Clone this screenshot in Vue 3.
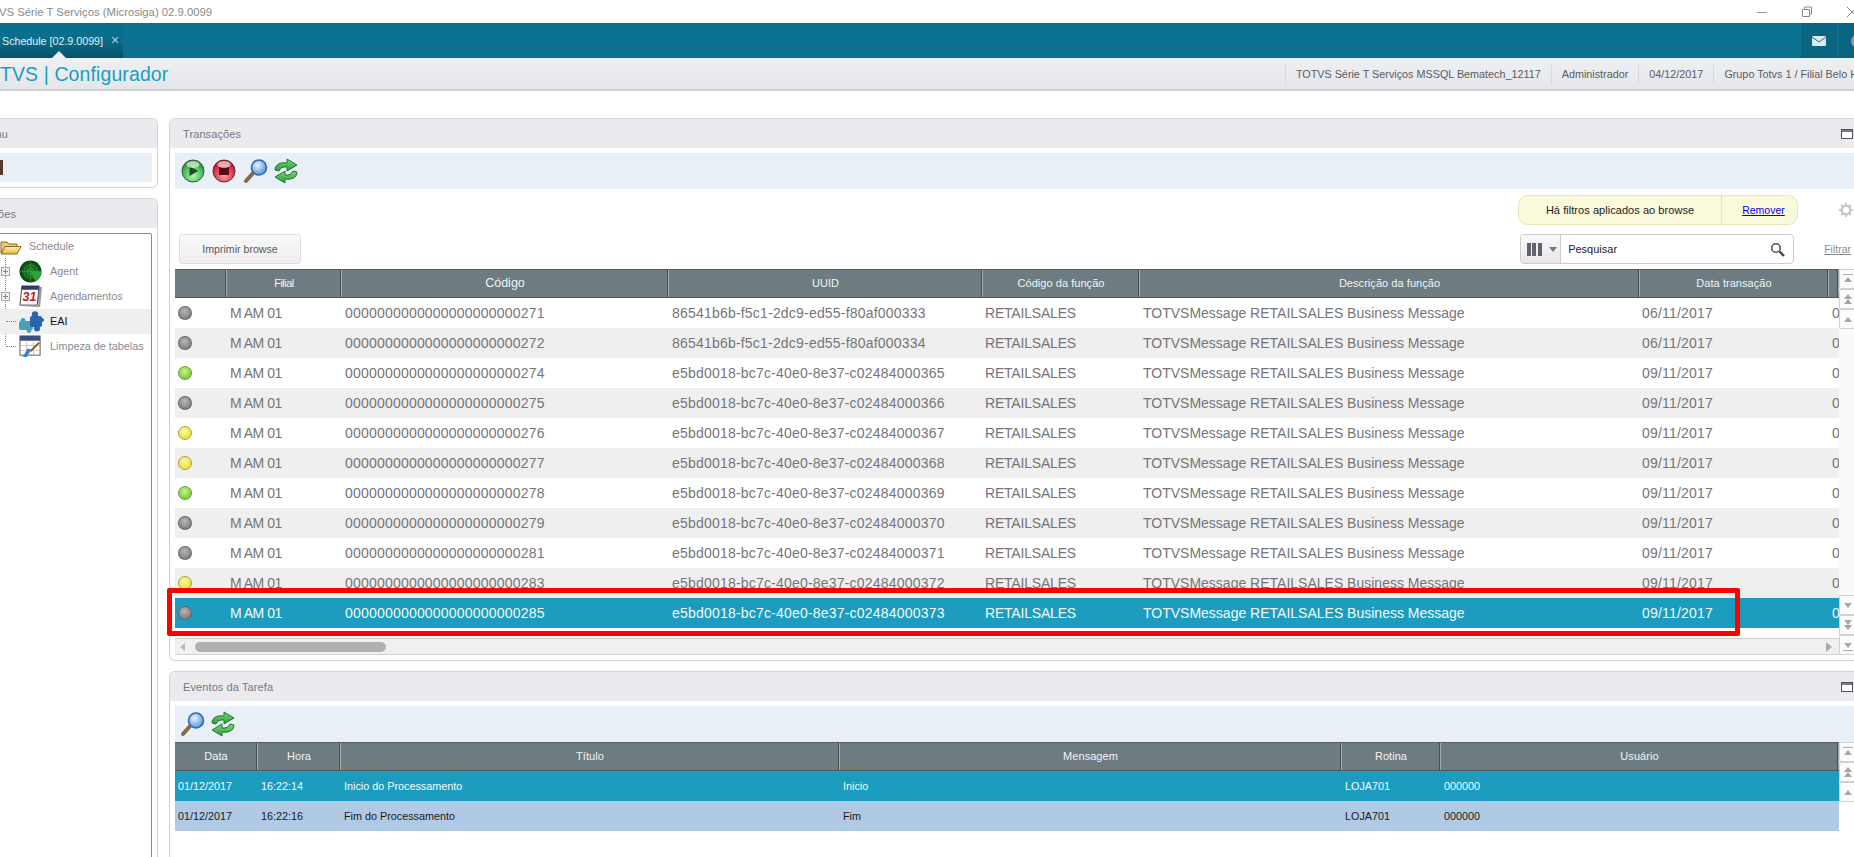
<script setup>
const cols = [
  { label: '', w: 52 },
  { label: 'Filial', w: 115 },
  { label: 'Código', w: 327, strong: true },
  { label: 'UUID', w: 314 },
  { label: 'Código da função', w: 157 },
  { label: 'Descrição da função', w: 500 },
  { label: 'Data transação', w: 189 },
  { label: '', w: 10 }
]
const rows = [
  ['gray', '271', '86541b6b-f5c1-2dc9-ed55-f80af000333', '06/11/2017'],
  ['gray', '272', '86541b6b-f5c1-2dc9-ed55-f80af000334', '06/11/2017'],
  ['green', '274', 'e5bd0018-bc7c-40e0-8e37-c02484000365', '09/11/2017'],
  ['gray', '275', 'e5bd0018-bc7c-40e0-8e37-c02484000366', '09/11/2017'],
  ['yellow', '276', 'e5bd0018-bc7c-40e0-8e37-c02484000367', '09/11/2017'],
  ['yellow', '277', 'e5bd0018-bc7c-40e0-8e37-c02484000368', '09/11/2017'],
  ['green', '278', 'e5bd0018-bc7c-40e0-8e37-c02484000369', '09/11/2017'],
  ['gray', '279', 'e5bd0018-bc7c-40e0-8e37-c02484000370', '09/11/2017'],
  ['gray', '281', 'e5bd0018-bc7c-40e0-8e37-c02484000371', '09/11/2017'],
  ['yellow', '283', 'e5bd0018-bc7c-40e0-8e37-c02484000372', '09/11/2017'],
  ['gray', '285', 'e5bd0018-bc7c-40e0-8e37-c02484000373', '09/11/2017']
]
const prefix = '0'.repeat(22)
const evCols = [
  { label: 'Data', w: 83 },
  { label: 'Hora', w: 83 },
  { label: 'Título', w: 499 },
  { label: 'Mensagem', w: 502 },
  { label: 'Rotina', w: 99 },
  { label: 'Usuário', w: 398 }
]
const events = [
  ['01/12/2017', '16:22:14', 'Inicio do Processamento', 'Inicio', 'LOJA701', '000000'],
  ['01/12/2017', '16:22:16', 'Fim do Processamento', 'Fim', 'LOJA701', '000000']
]
const infoCells = ['TOTVS Série T Serviços MSSQL Bematech_12117', 'Administrador', '04/12/2017', 'Grupo Totvs 1 / Filial Belo H']
</script>

<template>
  <div class="app">
    <svg width="0" height="0" class="defs">
      <defs>
        <radialGradient id="gGreen" cx=".5" cy=".72" r=".72"><stop offset="0" stop-color="#b4f2b0"/><stop offset=".6" stop-color="#4ac056"/><stop offset="1" stop-color="#1a7a2a"/></radialGradient>
        <radialGradient id="gRed" cx=".5" cy=".72" r=".72"><stop offset="0" stop-color="#f7a0a4"/><stop offset=".6" stop-color="#de3a48"/><stop offset="1" stop-color="#a01020"/></radialGradient>
        <radialGradient id="gLens" cx=".4" cy=".35" r=".7"><stop offset="0" stop-color="#eaf4ff"/><stop offset="1" stop-color="#4c8fd6"/></radialGradient>
        <radialGradient id="gRadar" cx=".5" cy=".5" r=".55"><stop offset="0" stop-color="#1f8428"/><stop offset="1" stop-color="#07400c"/></radialGradient>
        <linearGradient id="gFolder" x1="0" y1="0" x2="0" y2="1"><stop offset="0" stop-color="#fff3a8"/><stop offset="1" stop-color="#e8b83c"/></linearGradient>
        <linearGradient id="gArrow" x1="0" y1="0" x2="0" y2="1"><stop offset="0" stop-color="#7fd37f"/><stop offset="1" stop-color="#2c9a3a"/></linearGradient>
        <symbol id="icoSearch" viewBox="0 0 26 26">
          <line x1="3" y1="23" x2="11" y2="14" stroke="#8a6748" stroke-width="4" stroke-linecap="round"/>
          <circle cx="16" cy="9.500" r="7.500" fill="url(#gLens)" stroke="#2f6aa8" stroke-width="1.600"/>
        </symbol>
        <symbol id="icoRefresh" viewBox="0 0 24 26">
          <path d="M1 12 C1 6 7 4 13 5 V1 L23 7 L13 13 V9 C9 8.500 6 10 5 13 Z" fill="url(#gArrow)" stroke="#1e7a2a"/>
          <path d="M23 14 C23 20 17 22 11 21 V25 L1 19 L11 13 V17 C15 17.500 18 16 19 13 Z" fill="url(#gArrow)" stroke="#1e7a2a"/>
        </symbol>
      </defs>
    </svg>

    <header class="titlebar">
      <span class="title-text">VS Série T Serviços (Microsiga) 02.9.0099</span>
      <div class="win-ctrls">
        <svg width="12" height="12" viewBox="0 0 12 12"><line x1="1" y1="6.500" x2="11" y2="6.500" stroke="#999" /></svg>
        <svg width="12" height="12" viewBox="0 0 12 12"><path d="M3.500 3V1H10.500V8H8.500M1.500 3.500H8.500V10.500H1.500Z" fill="none" stroke="#888"/></svg>
        <svg width="12" height="12" viewBox="0 0 12 12"><path d="M1 1L11 11M11 1L1 11" stroke="#888" fill="none"/></svg>
      </div>
    </header>

    <nav class="tabbar">
      <div class="tab">
        <span>Schedule [02.9.0099]</span>
        <span class="tab-x">×</span>
        <i class="tab-arrow"></i>
      </div>
      <div class="tab-right">
        <div class="tb-btn">
          <svg width="14" height="10" viewBox="0 0 14 10"><rect width="14" height="10" rx="1" fill="#dfe9ee"/><path d="M0 1L7 6L14 1" fill="none" stroke="#0b7190"/></svg>
        </div>
        <div class="tb-btn tb-last"><i class="avatar"></i></div>
      </div>
    </nav>

    <div class="subheader">
      <span class="brand">TVS | Configurador</span>
      <div class="info">
        <span v-for="c in infoCells" :key="c" class="info-cell">{{ c }}</span>
      </div>
    </div>

    <main class="content">
      <aside class="side">
        <section class="panel menu-panel">
          <div class="panel-head side-head"><span class="clip-menu">Menu</span></div>
          <div class="menu-body"><div class="menu-box"><i class="menu-mark"></i></div></div>
        </section>
        <section class="panel tree-panel">
          <div class="panel-head side-head"><span class="clip-acoes">Ações</span></div>
          <div class="tree">
            <i class="tree-line"></i>
            <div class="node first">
              <svg class="folder" width="22" height="16" viewBox="0 0 22 16">
                <path d="M1 14V3H7L9 5H17V8H6L1 14Z" fill="#e8c97a" stroke="#8a6a2a"/>
                <path d="M1 15L5 7.500H21L17 15Z" fill="url(#gFolder)" stroke="#8a6a2a"/>
              </svg>
              <span class="label">Schedule</span>
            </div>
            <div class="node">
              <i class="plus"></i>
              <svg class="ico" width="23" height="23" viewBox="0 0 24 24">
                <circle cx="12" cy="12" r="11.500" fill="url(#gRadar)"/>
                <path d="M12 12L23 12A11 11 0 0 1 17 22Z" fill="#2fa23a"/>
                <circle cx="12" cy="12" r="7" fill="none" stroke="#4aa84e" stroke-width=".6"/>
                <circle cx="12" cy="12" r="3.500" fill="none" stroke="#4aa84e" stroke-width=".6"/>
                <path d="M12 1V23M1 12H23" stroke="#4aa84e" stroke-width=".5"/>
              </svg>
              <span class="label">Agent</span>
            </div>
            <div class="node">
              <i class="plus"></i>
              <svg class="ico" width="23" height="23" viewBox="0 0 24 24">
                <path d="M3 23L22 23L24 2H20V22Z" fill="#9a9a9a"/>
                <path d="M3 1H21L19 21H1Z" fill="#fff" stroke="#444"/>
                <path d="M3 1H21L20.500 5H2.500Z" fill="#2a3f6e"/>
                <text x="11" y="17" text-anchor="middle" class="cal-num">31</text>
              </svg>
              <span class="label">Agendamentos</span>
            </div>
            <div class="node active">
              <i class="stub"></i>
              <svg class="ico eai-ico" width="26" height="24" viewBox="0 0 26 24">
                <g fill="#4b9fb7">
                  <rect x="1" y="11" width="14" height="9" rx="2"/>
                  <circle cx="5" cy="10.500" r="2.400"/>
                  <circle cx="11" cy="20.500" r="2.400"/>
                </g>
                <g fill="#2a65a8">
                  <rect x="12" y="6" width="12" height="11" rx="2"/>
                  <circle cx="17" cy="4.500" r="3.200"/>
                  <circle cx="24" cy="10" r="2"/>
                  <circle cx="19" cy="18.500" r="3"/>
                </g>
              </svg>
              <span class="label eai">EAI</span>
            </div>
            <div class="node">
              <i class="stub"></i>
              <svg class="ico" width="23" height="23" viewBox="0 0 24 24">
                <rect x="1" y="1" width="21" height="20" fill="#fff" stroke="#555"/>
                <rect x="1" y="1" width="21" height="5" fill="#3a5078"/>
                <path d="M1 11H22M1 16H22M8 6V21M15 6V21" stroke="#bbb" stroke-width=".8"/>
                <path d="M21 8L12 17" stroke="#8a5a20" stroke-width="2"/>
                <path d="M13 15L8 23L4 23L9 14Z" fill="#3f7ccf"/>
              </svg>
              <span class="label">Limpeza de tabelas</span>
            </div>
          </div>
        </section>
      </aside>

      <div class="main">
        <section class="panel trans">
          <div class="panel-head">
            <span>Transações</span>
            <i class="collapse"></i>
          </div>
          <div class="toolbar">
            <svg width="24" height="24" viewBox="0 0 24 24"><circle cx="12" cy="12" r="11" fill="url(#gGreen)" stroke="#2c5c36"/><path d="M8.500 7L17 12L8.500 17Z" fill="#1d4a28"/><ellipse cx="12" cy="5.500" rx="6.500" ry="3.500" fill="#fff" opacity=".6"/></svg>
            <svg width="24" height="24" viewBox="0 0 24 24"><circle cx="12" cy="12" r="11" fill="url(#gRed)" stroke="#6a2630"/><rect x="7" y="8" width="10" height="8" fill="#5a0a12"/><ellipse cx="12" cy="5.500" rx="6.500" ry="3.500" fill="#fff" opacity=".6"/></svg>
            <svg width="26" height="26"><use href="#icoSearch"/></svg>
            <svg class="refresh" width="24" height="26"><use href="#icoRefresh"/></svg>
          </div>
          <div class="filter-area">
            <button class="print">Imprimir browse</button>
            <div class="filter-right">
              <div class="filter-top">
                <div class="pill">
                  <span class="pill-text">Há filtros aplicados ao browse</span>
                  <a class="pill-link">Remover</a>
                </div>
                <svg class="gear" width="14" height="14" viewBox="0 0 14 14"><circle cx="7" cy="7" r="4.200" fill="none" stroke="#c8c8c8" stroke-width="2.400"/><path d="M7 0V3M7 11V14M0 7H3M11 7H14M2 2L4 4M10 10L12 12M12 2L10 4M4 10L2 12" stroke="#c8c8c8" stroke-width="2"/></svg>
              </div>
              <div class="filter-bottom">
                <div class="search">
                  <div class="search-cols">
                    <i class="bars"></i>
                    <i class="caret"></i>
                  </div>
                  <span class="search-text">Pesquisar</span>
                  <svg width="15" height="15" viewBox="0 0 15 15"><circle cx="6" cy="6" r="4.300" fill="none" stroke="#555" stroke-width="1.600"/><line x1="9.500" y1="9.500" x2="14" y2="14" stroke="#444" stroke-width="2.400"/></svg>
                </div>
                <a class="filtrar">Filtrar</a>
              </div>
            </div>
          </div>

          <div class="grid-wrap">
            <div class="grid">
              <div class="ghead">
                <div v-for="(c, i) in cols" :key="i" class="gh" :class="{ strong: c.strong, tight: c.label === 'Filial' }" :style="{ width: c.w + 'px' }">{{ c.label }}</div>
              </div>
              <div v-for="(r, i) in rows" :key="r[1]" class="grow" :class="{ odd: i % 2 === 1, sel: i === 10 }">
                <div class="gc" :style="{ width: cols[0].w + 'px' }"><i class="led" :class="r[0]"></i></div>
                <div class="gc filial" :style="{ width: cols[1].w + 'px' }">M AM 01</div>
                <div class="gc num" :style="{ width: cols[2].w + 'px' }">{{ prefix + r[1] }}</div>
                <div class="gc num" :style="{ width: cols[3].w + 'px' }">{{ r[2] }}</div>
                <div class="gc retail" :style="{ width: cols[4].w + 'px' }">RETAILSALES</div>
                <div class="gc" :style="{ width: cols[5].w + 'px' }">TOTVSMessage RETAILSALES Business Message</div>
                <div class="gc num date" :style="{ width: cols[6].w + 'px' }">{{ r[3] }}</div>
                <div class="gc" :style="{ width: cols[7].w + 'px' }">0</div>
              </div>
              <div class="hscroll">
                <i class="arrow-left"></i>
                <i class="thumb"></i>
                <i class="arrow-right"></i>
              </div>
            </div>
            <div class="vscroll">
              <div class="vb"><i class="up bar-top"></i></div>
              <div class="vb"><i class="up"></i><i class="up"></i></div>
              <div class="vb"><i class="up"></i></div>
              <div class="vspace"></div>
              <div class="vb"><i class="down"></i></div>
              <div class="vb"><i class="down"></i><i class="down"></i></div>
              <div class="vb"><i class="down bar-bot"></i></div>
            </div>
          </div>
          <i class="highlight"></i>
        </section>

        <section class="panel events">
          <div class="panel-head">
            <span>Eventos da Tarefa</span>
            <i class="collapse"></i>
          </div>
          <div class="toolbar small">
            <svg width="26" height="26"><use href="#icoSearch"/></svg>
            <svg width="24" height="26"><use href="#icoRefresh"/></svg>
          </div>
          <div class="grid-wrap">
            <div class="grid">
              <div class="ghead">
                <div v-for="c in evCols" :key="c.label" class="gh" :style="{ width: c.w + 'px' }">{{ c.label }}</div>
              </div>
              <div v-for="(e, i) in events" :key="i" class="grow ev" :class="i === 0 ? 'sel' : 'blue'">
                <div v-for="(v, j) in e" :key="j" class="gc" :style="{ width: evCols[j].w + 'px' }">{{ v }}</div>
              </div>
            </div>
            <div class="vscroll ev-scroll">
              <div class="vb"><i class="up bar-top"></i></div>
              <div class="vb"><i class="up"></i><i class="up"></i></div>
              <div class="vb"><i class="up"></i></div>
            </div>
          </div>
        </section>
      </div>
    </main>
  </div>
</template>

<style>
html, body { margin: 0; padding: 0; background: #fff; overflow: hidden; }
</style>

<style scoped>
.app {
  width: 1854px; height: 857px; overflow: hidden;
  font-family: "Liberation Sans", Arial, sans-serif;
  color: #6b6b70; background: #fff;
  display: flex; flex-direction: column;
}
.defs { position: absolute; }
.titlebar {
  height: 23px; flex: none; display: flex; align-items: center; justify-content: space-between;
  font-size: 11.300px; color: #8a8a8a;
}
.title-text { margin-left: -1px; }
.win-ctrls { display: flex; gap: 33px; margin-right: -4px; align-items: center; }
.tabbar {
  height: 35px; flex: none; background: #0b7190; display: flex; justify-content: space-between;
}
.tab {
  width: 123px; position: relative; display: flex; align-items: center; gap: 8px;
  background: linear-gradient(#0a6f8e 0%, #0a6f8e 40%, #06546b 100%);
  color: #e6eef2; font-size: 10.700px; padding-left: 2px; box-sizing: border-box; white-space: nowrap;
}
.tab-x { color: #b5ced8; font-size: 14px; margin-top: -2px; }
.tab-arrow {
  position: absolute; left: 52px; bottom: 0;
  border-left: 7px solid transparent; border-right: 7px solid transparent; border-bottom: 7px solid #eef0f3;
}
.tab-right { display: flex; gap: 2px; }
.tb-btn {
  width: 36px; background: #0a6580; display: flex; align-items: center; justify-content: center;
}
.tb-last { width: 3px; justify-content: flex-start; padding-left: 12px; }
.avatar { width: 14px; height: 14px; border-radius: 50%; background: #7f9eac; flex: none; }
.subheader {
  height: 31px; flex: none; display: flex; justify-content: space-between; align-items: center;
  background: linear-gradient(#eef0f3, #e4e6e9); border-bottom: 2px solid #cfd0d3;
}
.brand { font-size: 19.500px; color: #1f9cc0; white-space: nowrap; letter-spacing: .1px; padding-top: 2px; }
.info { display: flex; align-items: center; height: 20px; flex: none; white-space: nowrap; font-size: 10.800px; color: #5b5b63; padding-top: 1px; margin-right: -4px; }
.info-cell { border-left: 1px solid #d6d8db; padding: 0 10px; line-height: 20px; }
.info-cell:last-child { padding-right: 0; }
.content {
  flex: 1; min-height: 0; display: flex; gap: 11px; padding-top: 27px; box-sizing: border-box;
}
.side { width: 158px; flex: none; display: flex; flex-direction: column; gap: 10px; }
.main { flex: 1; min-width: 0; display: flex; flex-direction: column; gap: 10px; }
.panel {
  border: 1px solid #d2d2d4; border-radius: 6px; background: #fff; box-sizing: border-box; position: relative;
}
.panel-head {
  height: 29px; background: #ebebef; border-radius: 5px 5px 0 0;
  display: flex; align-items: center; justify-content: space-between;
  font-size: 11px; letter-spacing: .1px; color: #77777d; padding-left: 13px; box-sizing: border-box;
}
.side-head { padding-left: 0; overflow: hidden; border-radius: 0 5px 0 0; }
.clip-menu { margin-left: -20px; }
.clip-acoes { margin-left: -15px; }
.side .panel { border-left: none; border-radius: 0 6px 6px 0; }
.menu-panel { height: 70px; flex: none; }
.menu-body { padding: 5px 5px 0 0; }
.menu-box { height: 29px; background: #e8eff7; display: flex; align-items: center; }
.menu-mark { width: 3px; height: 15px; background: #5a3a2a; }
.tree-panel { flex: 1; border-bottom: none; border-radius: 0 6px 0 0; }
.tree {
  margin: 5px 5px 0 0; height: 700px; border: 1px solid #8a8a8a; border-left: none; border-radius: 0 2px 0 0;
  position: relative; box-sizing: border-box;
}
.tree-line { position: absolute; left: 5px; top: 24px; height: 87px; border-left: 1px dotted #888; }
.node {
  height: 25px; display: flex; align-items: center; position: relative; font-size: 10.800px; color: #8a8a90;
  padding-left: 19px; white-space: nowrap;
}
.label { padding-bottom: 1px; }
.node.first { padding-left: 0; }
.folder { flex: none; margin-right: 7px; }
.ico { flex: none; margin-right: 8px; }
.eai-ico { margin-left: -1px; margin-right: 6px; }
.node.active { background: #efefef; }
.node.active .label { color: #111; }
.plus {
  position: absolute; left: 1px; top: 8px; width: 7px; height: 7px; background: #f0f0f0; border: 1px solid #aaa;
}
.plus::before { content: ""; position: absolute; left: 1px; right: 1px; top: 3px; height: 1px; background: #888; }
.plus::after { content: ""; position: absolute; top: 1px; bottom: 1px; left: 3px; width: 1px; background: #888; }
.stub { position: absolute; left: 6px; top: 12px; width: 10px; border-top: 1px dotted #888; }
.toolbar {
  margin: 5px 0 0 5px; height: 36px; background: #e8eff7; display: flex; align-items: center; gap: 7px; padding-left: 6px;
}
.refresh { margin-left: -2px; }
.toolbar.small { gap: 5px; padding-left: 5px; }
.filter-area {
  height: 80px; display: flex; justify-content: space-between; align-items: flex-end; margin-left: 9px; padding: 0 8px 5px 0; box-sizing: border-box;
}
.print {
  width: 122px; height: 30px; border: 1px solid #dcdcdc; border-radius: 3px; font: 10.600px "Liberation Sans", sans-serif;
  color: #5a5a66; background: linear-gradient(#f9f9f9, #eeeeee); padding: 0;
}
.filter-right { display: flex; flex-direction: column; align-items: flex-end; gap: 9px; }
.filter-top { display: flex; align-items: center; gap: 41px; margin-right: -2px; }
.pill {
  width: 280px; height: 30px; background: #fbf9dc; border: 1px solid #e7e6ba; border-radius: 10px; box-sizing: border-box;
  display: flex; align-items: center; font-size: 11px; color: #222;
}
.pill-text { width: 203px; text-align: center; height: 100%; line-height: 28px; border-right: 1px dotted #ccc; box-sizing: border-box; letter-spacing: .05px; }
.pill-link { flex: 1; text-align: center; color: #00e; text-decoration: underline; font-size: 10.500px; padding-left: 8px; }
.filter-bottom { display: flex; align-items: center; gap: 30px; }
.search {
  width: 274px; height: 30px; border: 1px solid #ccc; border-radius: 4px; box-sizing: border-box; display: flex; align-items: center;
  font-size: 11px; color: #222; background: #fff; padding-right: 8px;
}
.search-cols {
  width: 40px; height: 28px; background: linear-gradient(#fafafa, #e6e6e8); border-right: 1px solid #ccc; border-radius: 3px 0 0 3px;
  display: flex; align-items: center; gap: 7px; padding-left: 6px; box-sizing: border-box; flex: none;
}
.bars {
  width: 15px; height: 13px; flex: none;
  background: linear-gradient(90deg, #62626e 0 4px, transparent 4px 5.500px, #62626e 5.500px 9.500px, transparent 9.500px 11px, #62626e 11px 15px);
}
.caret { border-left: 4px solid transparent; border-right: 4px solid transparent; border-top: 5px solid #77777f; }
.search-text { flex: 1; padding-left: 7px; }
.filtrar { font-size: 10.500px; color: #8a8a90; text-decoration: underline; }
.grid-wrap { display: flex; margin-left: 5px; }
.grid { flex: none; overflow: hidden; width: 1664px; }
.ghead {
  height: 29px; display: flex; background: #6e7b80; border-top: 1px solid #555f63; border-bottom: 1px solid #4e585c; box-sizing: border-box;
}
.gh {
  flex: none; box-sizing: border-box; border-right: 1px solid #a3adb0; box-shadow: inset -1px 0 0 #454e52;
  color: #f2f4f5; font-size: 11px; letter-spacing: .05px; text-align: center; line-height: 27px; overflow: hidden; white-space: nowrap;
}
.gh.strong { font-size: 12.500px; letter-spacing: 0; }
.gh.tight { letter-spacing: -.5px; }
.grow { height: 30px; display: flex; align-items: center; color: #757578; font-size: 14px; background: #fff; white-space: nowrap; }
.grow.odd { background: #efefef; }
.grow.sel { background: #1c9dbf; color: #f3fafc; }
.grow.blue { background: #b0c9e4; color: #1b1b1b; }
.gc { flex: none; box-sizing: border-box; padding-left: 3px; overflow: hidden; }
.gc.num { letter-spacing: .2px; }
.gc.date { padding-left: 2px; }
.gc.retail { padding-left: 2px; letter-spacing: -.2px; }
.gc.filial { letter-spacing: -.5px; }
.led { display: block; width: 14px; height: 14px; border-radius: 50%; border: 1px solid rgba(70,70,70,.5); box-sizing: border-box; }
.led.gray { background: radial-gradient(circle at 45% 35%, #b6b6b6, #6f6f6f); }
.led.green { background: radial-gradient(circle at 45% 35%, #c8f58a, #63bb1e); border-color: #6a9a3a; }
.led.yellow { background: radial-gradient(circle at 45% 35%, #fbfba0, #e0d820); border-color: #a8a23a; }
.grow.ev { font-size: 10.800px; }
.hscroll {
  margin-top: 10px; height: 17px; background: #f0f0f0; border-top: 1px solid #d0d0d0; border-bottom: 1px solid #d0d0d0; box-sizing: border-box;
  display: flex; align-items: center; padding-left: 5px; position: relative;
}
.arrow-left { border-top: 4px solid transparent; border-bottom: 4px solid transparent; border-right: 5px solid #bbb; }
.arrow-right { position: absolute; right: 7px; top: 3px; border-top: 5px solid transparent; border-bottom: 5px solid transparent; border-left: 6px solid #aaa; }
.thumb { width: 191px; height: 10px; border-radius: 5px; background: #b0b0b0; margin-left: 10px; }
.vscroll { width: 16px; flex: none; display: flex; flex-direction: column; background: #fafafa; }
.ev-scroll { height: 60px; }
.vb {
  height: 20px; flex: none; background: #fbfbfb; border: 1px solid #d0d0d0; border-right: none; box-sizing: border-box;
  display: flex; flex-direction: column; align-items: center; justify-content: center; border-radius: 2px 0 0 2px;
}
.vspace { flex: 1; }
.up, .down { position: relative; border-left: 4px solid transparent; border-right: 4px solid transparent; }
.up { border-bottom: 5px solid #a6a6a6; }
.down { border-top: 5px solid #a6a6a6; }
.bar-top::before { content: ""; position: absolute; left: -5px; width: 10px; top: -3px; height: 1px; background: #aaa; }
.bar-bot::after { content: ""; position: absolute; left: -5px; width: 10px; bottom: -3px; height: 1px; background: #aaa; }
.collapse {
  width: 10px; height: 8px; border: 1px solid #4e4e5a; background: linear-gradient(#7d7d88 0 2px, #fff 2px); margin-right: 6px; flex: none;
}
.trans { flex: none; height: 543px; margin-right: -6px; border-radius: 6px 0 6px 6px; }
.events { flex: 1; border-bottom: none; margin-right: -6px; border-radius: 6px 0 0 0; }
.highlight {
  position: absolute; left: -3px; top: 469px; width: 1573px; height: 48px;
  border: 5px solid #f00; border-radius: 2px; box-sizing: border-box; pointer-events: none;
}
.cal-num { font: italic bold 13px "Liberation Sans", sans-serif; fill: #c0181e; }
</style>
